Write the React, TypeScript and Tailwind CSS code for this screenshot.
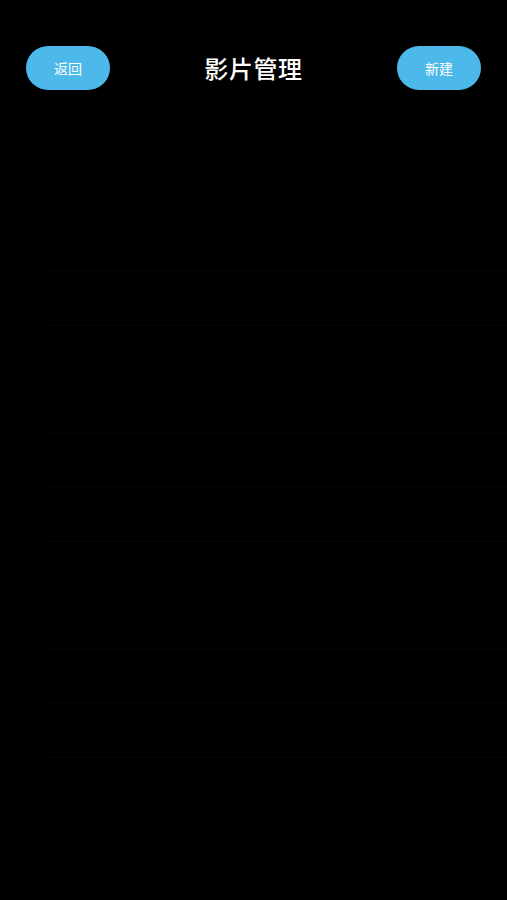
const rows = Array.from({ length: 10 }, (_, i) => i);

export default function App() {
  return (
    <div
      className="min-h-[900px] w-full bg-black text-white"
      style={{ fontFamily: '"Noto Sans CJK SC", "Noto Sans", sans-serif' }}
    >
      <header className="flex items-center justify-between px-[26px] pt-[46px]">
        <button className="h-[44px] w-[84px] rounded-full bg-[#4db9ea] text-[14px] text-white">
          返回
        </button>
        <h1 className="text-[24px] font-medium tracking-wide">影片管理</h1>
        <button className="h-[44px] w-[84px] rounded-full bg-[#4db9ea] text-[14px] text-white">
          新建
        </button>
      </header>

      <ul className="mt-[128px]">
        {rows.map((i) => (
          <li key={i} className="ml-[45px] h-[54px] border-b border-[#060606]" />
        ))}
      </ul>
    </div>
  );
}
